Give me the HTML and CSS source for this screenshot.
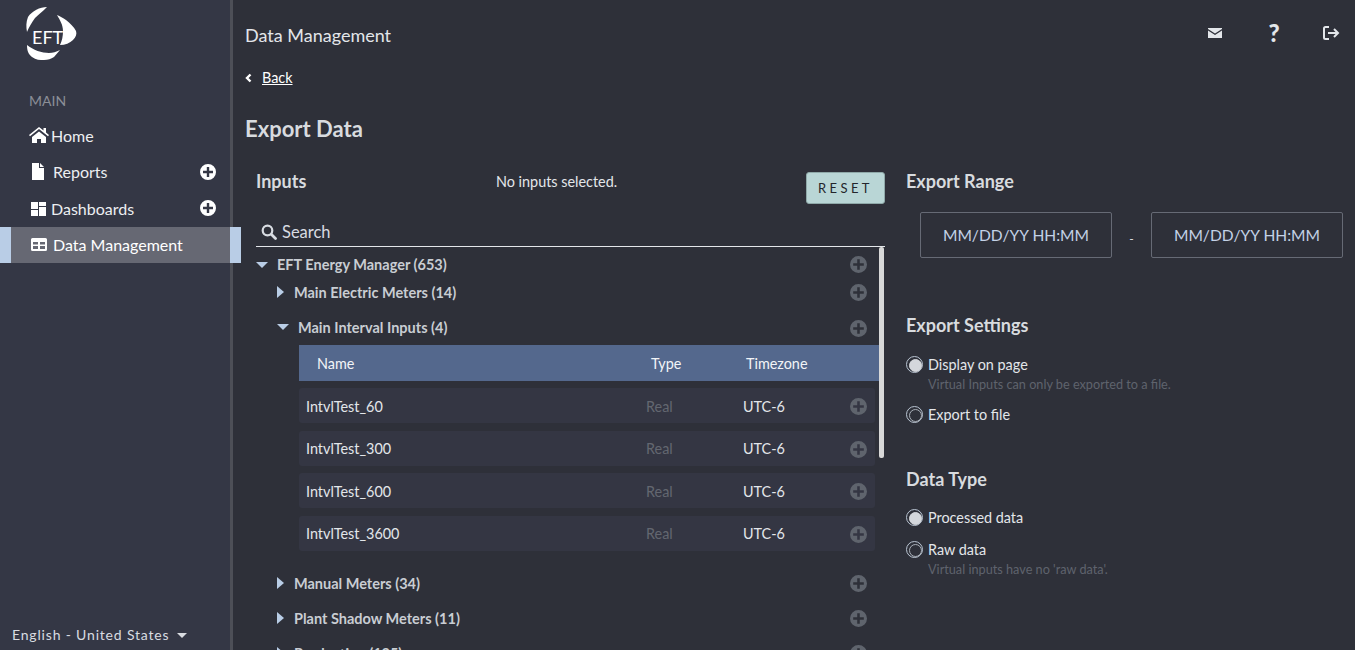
FILE: index.html
```html
<!DOCTYPE html>
<html lang="en">
<head>
  <meta charset="UTF-8" />
  <title>Export Data</title>
  <link rel="stylesheet" href="styles.css">
</head>
<body>
  <svg class="defs" width="0" height="0">
    <symbol id="plus" viewBox="0 0 16 16"><path fill-rule="evenodd" d="M8 0a8 8 0 1 0 0 16A8 8 0 0 0 8 0zM6.800 3h2.400v3.800H13v2.400H9.200V13H6.800V9.200H3V6.800h3.800z"/></symbol>
  </svg>
  <aside class="sidebar">
    <svg class="logo" width="54" height="56" viewBox="25 6 54 56">
      <path fill="#fff" d="M47 7C40 7 32 11 28 17 26 22 26 27 27 32 29 27 32 22 35 18 38 15 42 12 47 7z"/>
      <path fill="#fff" d="M57 15C60 20 63 25 63 31 63 36 62 41 60 45 65 45 70 43 73 40 76 37 77 34 76 31 74 27 70 23 66 20 63 18 60 16 57 15z"/>
      <path fill="#fff" d="M27 45C27 50 28 54 32 57 36 60 40 60 44 60 48 60 51 59 54 57L60 50C56 52 53 53 49 53 42 53 33 50 27 45z"/>
      <text x="32" y="43.500" class="logo-text">EFT</text>
    </svg>
    <div class="side-label">MAIN</div>
    <nav class="side-nav">
      <a class="nav-item"><svg class="nav-icon icon-home" width="20" height="16" viewBox="0 0 20 16"><path fill="#fff" d="M10 0 0 8l1 1.200L10 2l9 7.200L20 8l-3-2.400V1h-2.500v2.600zM3 10v6h5v-4h4v4h5v-6l-7-5.600z"/></svg>Home</a>
      <a class="nav-item"><svg class="nav-icon icon-doc" width="14" height="17" viewBox="0 0 14 17"><path fill="#fff" d="M1 0h7v5h5v12H1zM9 0l4 4H9z"/></svg>Reports<svg class="nav-plus"><use href="#plus"/></svg></a>
      <a class="nav-item"><svg class="nav-icon icon-dash" width="15" height="15" viewBox="0 0 15 15"><path fill="#fff" d="M0 1h7v7H0zM8 1h7v4H8zM8 6h7v9H8zM0 9h7v6H0z"/></svg>Dashboards<svg class="nav-plus"><use href="#plus"/></svg></a>
      <a class="nav-item active"><svg class="nav-icon icon-table" width="16" height="13" viewBox="0 0 16 13"><path fill="#fff" fill-rule="evenodd" d="M1.500 0h13A1.500 1.500 0 0 1 16 1.500v10a1.500 1.500 0 0 1-1.500 1.500h-13A1.500 1.500 0 0 1 0 11.500v-10A1.500 1.500 0 0 1 1.500 0zM2 4v2.500h5V4zm7 0v2.500h5V4zM2 8v3h5V8zm7 0v3h5V8z"/></svg>Data Management</a>
    </nav>
    <div class="lang">English - United States <span class="caret-down small"></span></div>
  </aside>

  <main class="content">
    <header class="topbar">
      <h2 class="page-name">Data Management</h2>
      <div class="top-icons">
        <svg width="14" height="10" viewBox="0 0 14 10"><path fill="#e3e6ea" d="M0 0h14v1L7 5.500 0 1zM0 2.500l7 4.500 7-4.500V10H0z"/></svg>
        <span class="help">?</span>
        <svg width="17" height="14" viewBox="0 0 17 14"><path fill="none" stroke="#e3e6ea" stroke-width="2" d="M6 1H2.500A1.500 1.500 0 0 0 1 2.500v9A1.500 1.500 0 0 0 2.500 13H6M5 7h10M11 3l4 4-4 4"/></svg>
      </div>
    </header>
    <a class="back"><svg width="7" height="10" viewBox="0 0 7 10"><path fill="none" stroke="#fff" stroke-width="2.400" d="M5.500 1.500 2 5l3.500 3.500"/></svg><span>Back</span></a>
    <h1 class="title">Export Data</h1>

    <div class="columns">
      <section class="inputs">
        <div class="inputs-head">
          <h3>Inputs</h3>
          <span class="none-selected">No inputs selected.</span>
          <button class="reset">RESET</button>
        </div>
        <div class="search">
          <svg width="16" height="16" viewBox="0 0 16 16"><circle cx="6.500" cy="6.500" r="4.800" fill="none" stroke="#d8dce2" stroke-width="2.200"/><path stroke="#d8dce2" stroke-width="2.800" stroke-linecap="round" d="m10.500 10.500 4 4"/></svg>
          Search
        </div>
        <div class="tree">
          <div class="tree-inner">
            <div class="node root"><span class="caret-down"></span><b>EFT Energy Manager (653)</b><svg class="add"><use href="#plus"/></svg></div>
            <div class="node sub first"><span class="caret-right"></span><b>Main Electric Meters (14)</b><svg class="add"><use href="#plus"/></svg></div>
            <div class="node sub open"><span class="caret-down"></span><b>Main Interval Inputs (4)</b><svg class="add"><use href="#plus"/></svg></div>
            <div class="data-table">
              <div class="thead"><span class="c-name">Name</span><span class="c-type">Type</span><span class="c-zone">Timezone</span></div>
              <div class="row"><span class="c-name">IntvlTest_60</span><span class="c-type">Real</span><span class="c-zone">UTC-6</span><svg class="add"><use href="#plus"/></svg></div>
              <div class="row"><span class="c-name">IntvlTest_300</span><span class="c-type">Real</span><span class="c-zone">UTC-6</span><svg class="add"><use href="#plus"/></svg></div>
              <div class="row"><span class="c-name">IntvlTest_600</span><span class="c-type">Real</span><span class="c-zone">UTC-6</span><svg class="add"><use href="#plus"/></svg></div>
              <div class="row"><span class="c-name">IntvlTest_3600</span><span class="c-type">Real</span><span class="c-zone">UTC-6</span><svg class="add"><use href="#plus"/></svg></div>
            </div>
            <div class="node sub"><span class="caret-right"></span><b>Manual Meters (34)</b><svg class="add"><use href="#plus"/></svg></div>
            <div class="node sub"><span class="caret-right"></span><b>Plant Shadow Meters (11)</b><svg class="add"><use href="#plus"/></svg></div>
            <div class="node sub"><span class="caret-right"></span><b>Production (125)</b><svg class="add"><use href="#plus"/></svg></div>
          </div>
          <div class="thumb"></div>
        </div>
      </section>

      <section class="options">
        <h3 class="range-title">Export Range</h3>
        <div class="range">
          <div class="date">MM/DD/YY HH:MM</div>
          <span class="range-sep">-</span>
          <div class="date">MM/DD/YY HH:MM</div>
        </div>
        <h3 class="settings">Export Settings</h3>
        <label class="radio on first"><i></i>Display on page</label>
        <p class="hint">Virtual Inputs can only be exported to a file.</p>
        <label class="radio next"><i></i>Export to file</label>
        <h3 class="data-type">Data Type</h3>
        <label class="radio on first"><i></i>Processed data</label>
        <label class="radio next"><i></i>Raw data</label>
        <p class="hint">Virtual inputs have no 'raw data'.</p>
      </section>
    </div>
  </main>
</body>
</html>
```

FILE: styles.css
```css
* {
  box-sizing: border-box;
}
html, body {
  height: 650px;
  overflow: hidden;
}
body {
  margin: 0;
  display: flex;
  font-family: 'Lato', sans-serif;
  font-size: 14.4px;
  background: #2e3039;
  color: #e3e6ea;
}
.defs {
  position: absolute;
}
h1, h2, h3, p {
  margin: 0;
}
svg {
  flex: none;
}

/* sidebar */
.sidebar {
  display: flex;
  flex-direction: column;
  flex: none;
  width: 233px;
  height: 650px;
  background: #343745;
  border-right: 3px solid #4d4f57;
}
.logo {
  display: block;
  margin: 6px 0 0 25px;
}
.logo-text {
  font-family: 'Lato', sans-serif;
  font-size: 18px;
  fill: #fff;
}
.side-label {
  padding: 30px 0 0 29px;
  font-size: 14px;
  line-height: 17px;
  color: #8b8e97;
}
.side-nav {
  margin-top: 8px;
}
.nav-item {
  display: flex;
  align-items: center;
  height: 36.500px;
  padding-left: 29px;
  font-size: 16px;
  color: #eceef1;
}
.nav-item.active {
  position: relative;
  width: 241px;
  background: #666873;
  border-left: 11px solid #b9cde6;
  border-right: 11px solid #b9cde6;
  padding-left: 20px;
  color: #fff;
  z-index: 2;
}
.icon-home {
  margin-right: 2px;
}
.icon-doc {
  margin: 0 8px 0 2px;
}
.icon-dash {
  margin: 0 5px 0 2px;
}
.icon-table {
  margin-right: 6px;
}
.nav-plus {
  width: 16px;
  height: 16px;
  margin: 0 14px 0 auto;
  fill: #fff;
}
.lang {
  margin-top: auto;
  padding: 0 0 6px 12px;
  font-size: 14px;
  line-height: 18px;
  letter-spacing: 0.82px;
  color: #d9dce1;
}
.lang .caret-down {
  margin-left: 3px;
  vertical-align: 2px;
}

/* carets */
.caret-down {
  display: inline-block;
  width: 0;
  height: 0;
  border-left: 6px solid transparent;
  border-right: 6px solid transparent;
  border-top: 6px solid #b9cde6;
}
.caret-down.small {
  border-left-width: 5.500px;
  border-right-width: 5.500px;
  border-top: 5px solid #d9dce1;
}
.caret-right {
  display: inline-block;
  width: 0;
  height: 0;
  border-top: 6px solid transparent;
  border-bottom: 6px solid transparent;
  border-left: 7px solid #b9cde6;
}

/* main */
.content {
  flex: 1;
  min-width: 0;
  padding-left: 12px;
}
.topbar {
  display: flex;
  justify-content: space-between;
  height: 62px;
}
.page-name {
  padding-top: 24px;
  font-size: 18px;
  line-height: 23px;
  font-weight: 400;
  color: #e3e6ea;
}
.top-icons {
  display: flex;
  align-items: center;
  height: 66px;
  color: #e3e6ea;
}
.top-icons svg:first-child {
  margin-right: 45px;
}
.top-icons svg:last-child {
  margin: 0 15px 0 42px;
}
.help {
  width: 14px;
  font-size: 24px;
  font-weight: 900;
  line-height: 24px;
  text-align: center;
}
.back {
  display: flex;
  align-items: center;
  height: 31px;
  color: #fff;
}
.back svg {
  margin-right: 10px;
}
.back span {
  text-decoration: underline;
}
.title {
  margin-top: 22px;
  font-size: 22px;
  line-height: 28px;
  font-weight: 700;
  color: #d8dbdf;
}
.columns {
  display: flex;
  margin-top: 16px;
}

/* inputs column */
.inputs {
  flex: 0 0 640px;
  padding-left: 11px;
}
.inputs-head {
  display: flex;
  align-items: flex-start;
  width: 629px;
  height: 60px;
}
h3 {
  font-size: 18px;
  line-height: 23px;
  font-weight: 700;
  color: #d8dbdf;
}
.inputs-head h3 {
  flex: 0 0 240px;
  padding-top: 11px;
}
.none-selected {
  margin-top: 14px;
  line-height: 18px;
}
.reset {
  width: 79px;
  height: 32px;
  margin: 13px 0 0 auto;
  padding: 0;
  border: 1px solid #8fa9a9;
  border-radius: 3px;
  background: #b9d6d6;
  color: #23252c;
  font-family: 'Lato', sans-serif;
  font-size: 13px;
  letter-spacing: 3.400px;
}
.search {
  display: flex;
  align-items: center;
  gap: 5px;
  width: 629px;
  height: 28px;
  padding: 0 0 2px 5px;
  border-bottom: 1px solid #e3e6ea;
  font-size: 16.500px;
  color: #d8dce2;
}
.tree {
  position: relative;
  width: 631px;
  height: 403px;
  overflow: hidden;
}
.tree-inner {
  width: 624px;
}
.thumb {
  position: absolute;
  left: 623px;
  top: 0;
  width: 5px;
  height: 211px;
  border-radius: 2px;
  background: #d8d8d8;
}
.node {
  display: flex;
  align-items: center;
  font-size: 14.500px;
  color: #c9cdd3;
}
.node b {
  font-weight: 700;
}
.add {
  width: 17px;
  height: 17px;
  margin: 0 13px 0 auto;
  fill: #5f646d;
}
.root {
  height: 35px;
}
.root .caret-down {
  margin-right: 9px;
}
.sub {
  height: 35px;
  padding-left: 21px;
}
.sub .caret-right {
  margin: -2px 10px 0 0;
}
.sub.first {
  height: 21px;
  margin-bottom: 7px;
}
.sub.open .caret-down {
  margin: -2px 9px 0 0;
}
.sub.open .add {
  margin-top: 2px;
}
.data-table {
  width: 581px;
  margin-left: 43px;
  padding-bottom: 8px;
}
.thead {
  display: flex;
  align-items: center;
  height: 36px;
  margin-bottom: 7px;
  background: #54688d;
  color: #f2f4f7;
}
.thead .c-name {
  width: 352px;
  padding-left: 18px;
}
.thead .c-type {
  width: 95px;
}
.row {
  display: flex;
  align-items: center;
  width: 576px;
  height: 35px;
  margin-bottom: 7.500px;
  padding-top: 1px;
  border-radius: 3px;
  background: #343643;
}
.row .c-name {
  width: 347px;
  padding-left: 7px;
}
.row .c-type {
  width: 97px;
  color: #636770;
}
.row .add {
  margin: 1px 8px 0 auto;
}

/* right column */
.options {
  flex: 0 0 auto;
  width: 460px;
  padding-left: 19px;
}
.range-title {
  padding-top: 11px;
}
.range {
  display: flex;
  align-items: center;
  margin: 19px 0 0 14px;
}
.date {
  width: 192px;
  height: 46px;
  border: 1px solid #666a75;
  border-radius: 2px;
  text-align: center;
  line-height: 44px;
  font-size: 15.600px;
  color: #c3d2e6;
}
.range-sep {
  width: 39px;
  padding-top: 7px;
  text-align: center;
  font-size: 12px;
}
.settings {
  margin-top: 56px;
}
.data-type {
  margin-top: 45px;
  line-height: 22px;
}
.radio {
  display: flex;
  align-items: center;
  gap: 5px;
  height: 18px;
}
.radio.first {
  margin-top: 18px;
}
.radio.next {
  margin-top: 14px;
}
.hint + .radio.next {
  margin-top: 13px;
}
.radio i {
  position: relative;
  width: 17px;
  height: 17px;
  border: 1px solid #b9c4d2;
  border-radius: 50%;
}
.radio i::after {
  content: "";
  position: absolute;
  left: 2px;
  top: 2px;
  width: 11px;
  height: 11px;
  border-radius: 50%;
  border: 1px solid #a9afb8;
}
.radio.on i::after {
  background: #d4d7dc;
  border-color: #d4d7dc;
}
.hint {
  margin: 3px 0 0 22px;
  font-size: 12.700px;
  line-height: 16px;
  color: #5f636d;
}
```
